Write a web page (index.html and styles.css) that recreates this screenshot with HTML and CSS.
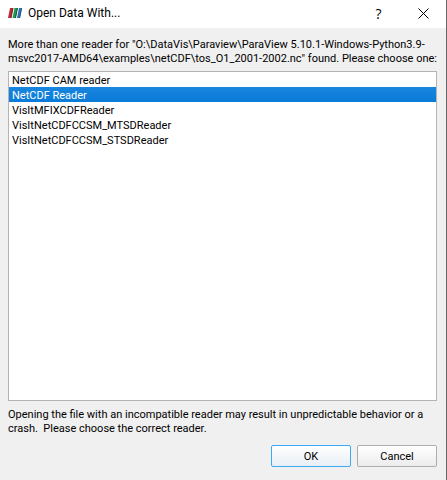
FILE: index.html
```html
<!DOCTYPE html>
<html lang="en">
<head>
<meta charset="utf-8">
<title>Open Data With...</title>
<link rel="stylesheet" href="styles.css">
</head>
<body>
<main class="dialog">
  <header class="titlebar">
    <svg class="logo" viewBox="0 0 14 10" aria-hidden="true">
      <path fill="#c3283a" d="M2 0h3l-2 10h-3z"/>
      <path fill="#6b1a22" d="M4.500 0h1l-2 10h-1z"/>
      <path fill="#1d9a50" d="M6.500 0h3l-2 10h-3z"/>
      <path fill="#14502e" d="M9 0h1l-2 10h-1z"/>
      <path fill="#2a70b4" d="M11 0h3l-2 10h-3z"/>
      <path fill="#173a5e" d="M13.500 0h.5l-2 10h-.5z"/>
    </svg>
    <h1 class="title">Open Data With...</h1>
    <button class="tool" type="button" aria-label="Help">?</button>
    <button class="tool" type="button" aria-label="Close">
      <svg class="close" viewBox="0 0 11 11" aria-hidden="true"><path d="M.5 .5l10 10M10.500 .5l-10 10" fill="none" stroke="#000"/></svg>
    </button>
  </header>
  <form class="content">
    <label class="message" for="readers">More than one reader for "O:\DataVis\Paraview\ParaView 5.10.1-Windows-Python3.9-<br>msvc2017-AMD64\examples\netCDF\tos_O1_2001-2002.nc" found. Please choose one:</label>
    <select class="readers" id="readers" size="5">
      <option>NetCDF CAM reader</option>
      <option selected>NetCDF Reader</option>
      <option>VisItMFIXCDFReader</option>
      <option>VisItNetCDFCCSM_MTSDReader</option>
      <option>VisItNetCDFCCSM_STSDReader</option>
    </select>
    <p class="message">Opening the file with an incompatible reader may result in unpredictable behavior or a<br>crash.&nbsp; Please choose the correct reader.</p>
    <div class="actions">
      <button class="button primary" type="button">OK</button>
      <button class="button" type="button">Cancel</button>
    </div>
  </form>
</main>
</body>
</html>
```
FILE: styles.css
```css
* { box-sizing: border-box; }

body {
  margin: 0;
  font: 11px/14px Roboto, "Open Sans", sans-serif;
  color: #000;
}

.dialog {
  display: flex;
  flex-direction: column;
  min-height: 100vh;
  background: #f0f0f0;
  border-right: 1px solid #66696c;
}

.titlebar {
  display: flex;
  align-items: center;
  height: 28px;
  padding: 0 0 2px 8px;
  background: #fff;
}

.logo { width: 14px; height: 10px; }

.title {
  flex: 1;
  margin: 0 0 0 6px;
  font-size: 12px;
  font-weight: 400;
}

.tool {
  display: flex;
  align-items: center;
  justify-content: center;
  width: 45px;
  height: 26px;
  padding: 0;
  border: 0;
  background: none;
  font: 14px "Open Sans", sans-serif;
  color: #000;
}

.close { width: 11px; height: 11px; }

.content {
  display: flex;
  flex: 1;
  flex-direction: column;
  padding: 10px 9px 13px 8px;
}

.message { margin: 0; white-space: nowrap; }

.readers {
  flex: 1;
  margin: 5px 0 7px;
  padding: 0;
  border: 1px solid #b4b4b4;
  border-radius: 0;
  outline: 0;
  background: #fff;
  font: inherit;
  overflow: hidden;
}

.readers option {
  height: 15px;
  min-height: 15px;
  padding: 2px 3px 0;
  line-height: 13px;
  color: #000;
}

.readers option:checked {
  background: linear-gradient(#1985de, #0a7bd8);
  color: #fff;
}

.actions {
  display: flex;
  justify-content: flex-end;
  gap: 6px;
  margin-top: 9px;
}

.button {
  width: 80px;
  height: 22px;
  padding: 1px 0 0;
  border: 1px solid #adadad;
  border-radius: 2px;
  background: linear-gradient(#fff, #ececec);
  font: inherit;
  color: #000;
}

.primary {
  border-color: #3daaf5;
  background: linear-gradient(#fff, #e8eff5);
}
```
